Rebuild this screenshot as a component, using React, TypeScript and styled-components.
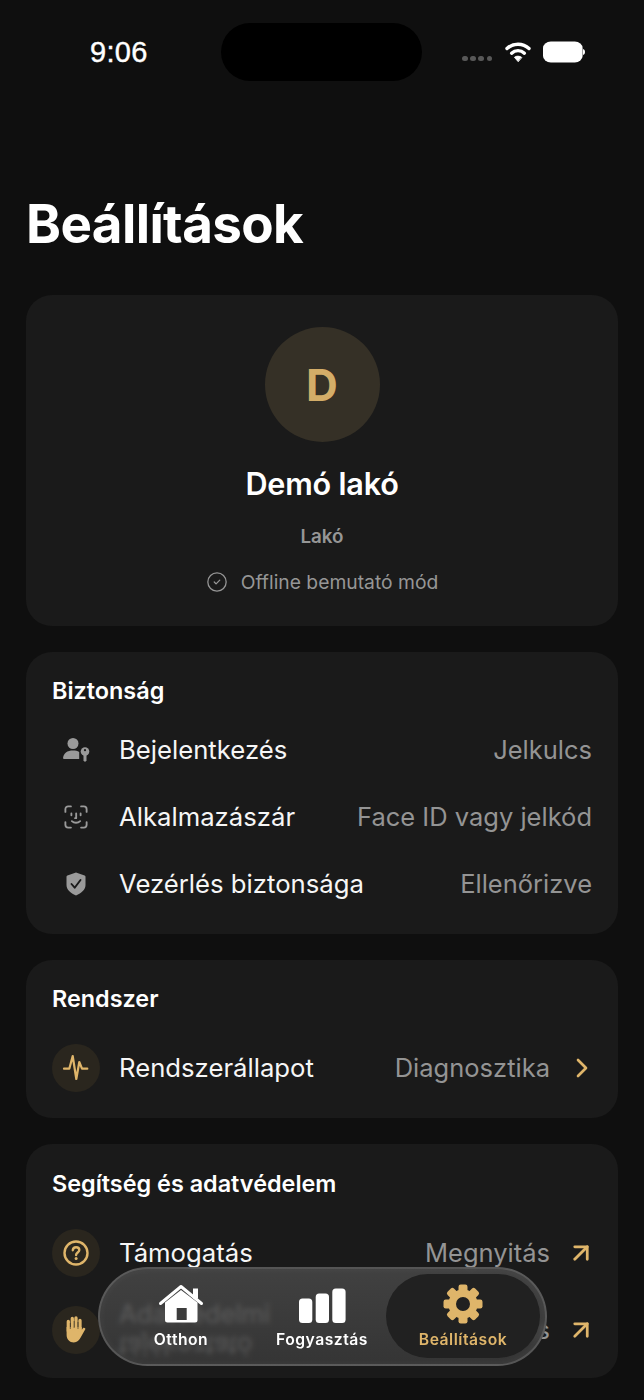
import React from "react";
import styled, { createGlobalStyle } from "styled-components";
import { ArrowUpRight, ChevronRight, CircleCheck } from "lucide-react";

const Global = createGlobalStyle`
  html, body { margin: 0; padding: 0; background: #0f0f0f; }
  body { font-family: Inter, "Noto Sans", sans-serif; color: #fff; -webkit-font-smoothing: antialiased; }
`;

const gold = "#dfb56a";

const Page = styled.div`
  width: 644px;
  height: 1400px;
  overflow: hidden;
  position: relative;
  background: #0f0f0f;
  padding: 0 26px;
  box-sizing: border-box;
`;
const StatusBar = styled.div`
  height: 104px;
  margin: 0 -26px;
  padding: 23px 59px 0 90px;
  box-sizing: border-box;
  display: grid;
  grid-template-columns: 131px 201px 1fr;
  align-items: start;
`;
const Time = styled.div`
  font-family: "Liberation Sans", sans-serif;
  font-size: 29px;
  line-height: 59px;
  letter-spacing: 0.3px;
  color: #fff;
  -webkit-text-stroke: 0.4px #fff;
`;
const Island = styled.div`
  height: 58px;
  border-radius: 29px;
  background: #000;
`;
const StatusIcons = styled.div`
  display: flex;
  align-items: center;
  justify-content: flex-end;
  height: 58px;
  gap: 12px;
`;
const Dots = styled.div`
  display: flex;
  gap: 2.6px;
  margin-top: 13px;
  margin-right: 1px;
`;
const Dot = styled.span`
  width: 5.5px;
  height: 5.5px;
  border-radius: 50%;
  background: #585858;
`;
const Title = styled.h1`
  margin: -1px 0 0 0;
  font-size: 52.900px;
  line-height: 60px;
  padding-top: 91px;
  font-weight: 700;
  letter-spacing: -0.6px;
`;
const Stack = styled.div`
  display: flex;
  flex-direction: column;
  gap: 26px;
  margin-top: 41px;
`;
const Card = styled.section<{ $pt?: number; $pb?: number }>`
  background: #1a1a1a;
  border-radius: 26px;
  padding: ${(p) => p.$pt ?? 26}px 26px ${(p) => p.$pb ?? 0}px;
`;
const ProfileCard = styled(Card)`
  height: 331px;
  box-sizing: border-box;
  padding-top: 32px;
  display: flex;
  flex-direction: column;
  align-items: center;
`;
const Avatar = styled.div`
  width: 115px;
  height: 115px;
  border-radius: 50%;
  background: #353026;
  display: flex;
  align-items: center;
  justify-content: center;
  color: #d4ad68;
  font-size: 44px;
  font-weight: 700;
`;
const Name = styled.div`
  margin-top: 23px;
  font-size: 30.600px;
  line-height: 38px;
  font-weight: 600;
  letter-spacing: -0.2px;
`;
const Role = styled.div`
  margin-top: 23px;
  font-size: 18.800px;
  line-height: 22px;
  font-weight: 600;
  color: #969696;
`;
const Offline = styled.div`
  margin-top: 22px;
  display: flex;
  align-items: center;
  gap: 13px;
  font-size: 19.300px;
  line-height: 24px;
  color: #969696;
`;
const SectionTitle = styled.h2<{ $gap: number }>`
  margin: 0 0 ${(p) => p.$gap}px;
  font-size: 23.400px;
  line-height: 26px;
  font-weight: 600;
`;
const Row = styled.div<{ $h?: number }>`
  display: flex;
  align-items: center;
  height: ${(p) => p.$h ?? 67}px;
  gap: 19px;
`;
const IconSlot = styled.div`
  width: 48px;
  height: 48px;
  flex: none;
  display: flex;
  align-items: center;
  justify-content: center;
`;
const GoldBadge = styled(IconSlot)`
  border-radius: 50%;
  background: #2a261e;
  color: ${gold};
`;
const Label = styled.div`
  font-size: 25.700px;
  line-height: 32px;
  color: #f6f6f6;
  flex: 1;
  white-space: nowrap;
`;
const RefractedLine = styled.span`
  display: block;
  transform: scaleY(-1);
`;
const Value = styled.div`
  font-size: 25.500px;
  line-height: 32px;
  color: #949494;
  white-space: nowrap;
`;
const Trail = styled.div<{ $shift?: number }>`
  width: 22px;
  margin-left: 2px;
  margin-right: -1px;
  display: flex;
  justify-content: center;
  color: ${gold};
  svg { flex: none; transform: translateX(${(p) => p.$shift ?? 0}px); }
`;
const Nav = styled.nav`
  position: absolute;
  left: 98px;
  top: 1267px;
  width: 449px;
  height: 99px;
  box-sizing: border-box;
  border-radius: 50px;
  background: linear-gradient(180deg, rgba(72, 72, 72, 0.86), rgba(58, 58, 58, 0.86));
  border: 2px solid rgba(118, 118, 118, 0.5);
  box-shadow: inset 0 0 8px rgba(255, 255, 255, 0.05);
  backdrop-filter: blur(2.5px);
  display: grid;
  grid-template-columns: 154px 128px 154px;
  padding: 5px 5px 6px 4px;
`;
const NavItem = styled.div<{ $active?: boolean }>`
  display: flex;
  flex-direction: column;
  align-items: center;
  justify-content: flex-end;
  padding-bottom: 8px;
  gap: 6px;
  color: ${(p) => (p.$active ? gold : "#fff")};
  font-size: 15.700px;
  line-height: 20px;
  font-weight: 600;
  letter-spacing: 0.5px;
  border-radius: 42px;
  background: ${(p) => (p.$active ? "#212121" : "transparent")};
`;

const Wifi = () => (
  <svg width="26" height="22" viewBox="0 0 26 22" fill="none" stroke="#fff" strokeWidth="3.4" strokeLinecap="round">
    <path d="M2 7.500C8 1.800 18 1.800 24 7.500" />
    <path d="M6.600 12.200C10.200 8.800 15.800 8.800 19.400 12.200" />
    <path d="M13 20.500l-3.600-4.200c2-1.600 5.200-1.600 7.200 0z" fill="#fff" strokeWidth="0.8" strokeLinejoin="round" />
  </svg>
);
const Battery = () => (
  <svg width="42" height="22" viewBox="0 0 42 22">
    <rect x="0" y="0.5" width="33" height="21" rx="6.500" fill="#fff" transform="scale(1.2 1)" />
    <path d="M40 8c1.400.3 2 1.500 2 3s-.6 2.700-2 3z" fill="#fff" />
  </svg>
);
const PersonKey = () => (
  <svg width="30" height="26" viewBox="0 0 30 26" fill="#9a9a9a">
    <circle cx="12" cy="6.500" r="5.500" />
    <path d="M2 22c0-6 4.500-8.500 10-8.500 2.400 0 4.500.5 6.200 1.400v7.100H3c-.7 0-1-.2-1-.9z" />
    <circle cx="24" cy="14.500" r="4.300" />
    <path d="M22.500 16h3v7.500l-1.500 1.500-1.500-1.500z" />
    <circle cx="24" cy="13.200" r="1.100" fill="#1a1a1a" />
  </svg>
);
const FaceId = () => (
  <svg width="24" height="24" viewBox="0 0 26 26" fill="none" stroke="#9a9a9a" strokeWidth="2" strokeLinecap="round" strokeLinejoin="round">
    <path d="M1.500 7.500V4.500a3 3 0 0 1 3-3h3M18.500 1.500h3a3 3 0 0 1 3 3v3M24.500 18.500v3a3 3 0 0 1-3 3h-3M7.500 24.500h-3a3 3 0 0 1-3-3v-3" />
    <path d="M8 9.200v2M18 9.200v2M13.200 9v5.300h-1.200M8.500 17.500c2.500 2.300 6.500 2.300 9 0" />
  </svg>
);
const Shield = () => (
  <svg width="20" height="24" viewBox="0 0 20 24">
    <path d="M10 .5l8.600 3c.6.2.9.6.9 1.200v8.300c0 4.500-3.800 8-9.500 10.500C4.300 21 .5 17.500.5 13V4.700c0-.6.3-1 .9-1.200z" fill="#9a9a9a" />
    <path d="M5.500 12l3.200 3.700 5.800-7.700" fill="none" stroke="#1a1a1a" strokeWidth="1.900" strokeLinecap="round" strokeLinejoin="round" />
  </svg>
);
const Pulse = () => (
  <svg width="48" height="48" viewBox="0 0 48 48" fill="none" stroke={gold} strokeWidth="2.200" strokeLinecap="round" strokeLinejoin="round">
    <path d="M12 24.700h5.300l3.400-12.700 3.600 23 3-17 2.700 6.700H35.300" />
  </svg>
);
const Question = () => (
  <svg width="26" height="26" viewBox="0 0 26 26" fill="none" stroke={gold}>
    <circle cx="13" cy="13" r="11.500" strokeWidth="2.400" />
    <path d="M9.800 10.200c.2-1.900 1.500-3 3.300-3s3.200 1.100 3.200 2.800c0 2.500-3.200 2.600-3.200 5" strokeWidth="2.400" strokeLinecap="round" />
    <circle cx="13.100" cy="18.600" r="1.500" fill={gold} stroke="none" />
  </svg>
);
const Hand = () => (
  <svg width="20" height="27" viewBox="0 0 20 27" fill={gold} stroke="none">
    <path d="M.6 11v8c0 4.300 3 7.500 7.200 7.500 3.400 0 5.300-2.200 6.700-4.700l4.800-8.500c.5-1-1.400-2.200-2.400-1l-1.200 1.700V11z" />
    <path d="M2.300 15V5.500M6.300 13V2.500M10 13V2M14 14V4.500" fill="none" stroke={gold} strokeWidth="3.300" strokeLinecap="round" />
    <path d="M4.300 7v6M8.150 5v7M12 6v7" fill="none" stroke="#2a261e" strokeWidth="0.6" />
  </svg>
);
const House = () => (
  <svg width="46" height="40" viewBox="0 0 46 40">
    <path d="M7 18.500L23 6l16.500 12.500V36a2.500 2.500 0 0 1-2.500 2.500H9.500A2.500 2.500 0 0 1 7 36z" fill="#fff" />
    <rect x="18.700" y="24" width="10" height="12" fill="#3c3c3c" />
    <path d="M2.500 19.500L23 2.500l20.500 17" fill="none" stroke="#fff" strokeWidth="3" strokeLinecap="round" strokeLinejoin="round" />
    <rect x="35" y="4.500" width="5" height="10" fill="#fff" />
  </svg>
);
const Bars = () => (
  <svg width="48" height="36" viewBox="0 0 48 36" fill="#fff">
    <rect x="1" y="10.500" width="13.300" height="24.500" rx="3.500" />
    <rect x="17.700" y="5.500" width="13.300" height="29.500" rx="3.500" />
    <rect x="34.300" y="0.500" width="13.300" height="34.500" rx="3.500" />
  </svg>
);
const Gear = () => (
  <svg width="40" height="40" viewBox="-20 -20 40 40" fill={gold}>
    {[0, 45, 90, 135, 180, 225, 270, 315].map((a) => (
      <rect key={a} x="-4.500" y="-19.500" width="9" height="9" rx="2.200" transform={`rotate(${a})`} />
    ))}
    <circle r="10.800" fill="none" stroke={gold} strokeWidth="7.600" />
  </svg>
);

export default function App() {
  return (
    <Page>
      <Global />
      <StatusBar>
        <Time>9:06</Time>
        <Island />
        <StatusIcons>
          <Dots><Dot /><Dot /><Dot /><Dot /></Dots>
          <Wifi />
          <Battery />
        </StatusIcons>
      </StatusBar>
      <Title>Beállítások</Title>
      <Stack>
        <ProfileCard>
          <Avatar>D</Avatar>
          <Name>Demó lakó</Name>
          <Role>Lakó</Role>
          <Offline><CircleCheck size={22} strokeWidth={1.400} />Offline bemutató mód</Offline>
        </ProfileCard>
        <Card $pb={16.5}>
          <SectionTitle $gap={12}>Biztonság</SectionTitle>
          <Row><IconSlot><PersonKey /></IconSlot><Label>Bejelentkezés</Label><Value>Jelkulcs</Value></Row>
          <Row><IconSlot><FaceId /></IconSlot><Label>Alkalmazászár</Label><Value>Face ID vagy jelkód</Value></Row>
          <Row><IconSlot><Shield /></IconSlot><Label>Vezérlés biztonsága</Label><Value>Ellenőrizve</Value></Row>
        </Card>
        <Card $pb={16.5}>
          <SectionTitle $gap={22.5}>Rendszer</SectionTitle>
          <Row>
            <GoldBadge><Pulse /></GoldBadge>
            <Label>Rendszerállapot</Label>
            <Value>Diagnosztika</Value>
            <Trail><ChevronRight size={32} strokeWidth={2} /></Trail>
          </Row>
        </Card>
        <Card $pt={27} $pb={5}>
          <SectionTitle $gap={22.5}>Segítség és adatvédelem</SectionTitle>
          <Row>
            <GoldBadge><Question /></GoldBadge>
            <Label>Támogatás</Label>
            <Value>Megnyitás</Value>
            <Trail $shift={-1}><ArrowUpRight size={30} strokeWidth={2.200} /></Trail>
          </Row>
          <Row $h={87}>
            <GoldBadge><Hand /></GoldBadge>
            <Label>Adatvédelmi<RefractedLine>tájékoztató</RefractedLine></Label>
            <Value>Megnyitás</Value>
            <Trail $shift={-1}><ArrowUpRight size={30} strokeWidth={2.200} /></Trail>
          </Row>
        </Card>
      </Stack>
      <Nav>
        <NavItem><House />Otthon</NavItem>
        <NavItem><Bars />Fogyasztás</NavItem>
        <NavItem $active><Gear />Beállítások</NavItem>
      </Nav>
    </Page>
  );
}
